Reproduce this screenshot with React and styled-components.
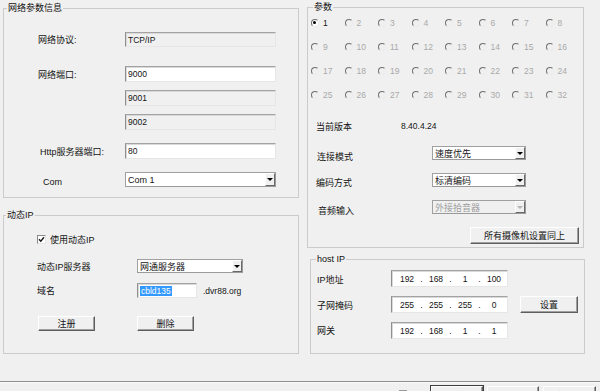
import styled, { createGlobalStyle } from "styled-components";

const GlobalStyle = createGlobalStyle`
  html, body {
    margin: 0;
    padding: 0;
    width: 600px;
    height: 391px;
    overflow: hidden;
    background: #f0f0f0;
  }
  body {
    font-family: "Liberation Sans", "Noto Sans CJK SC", sans-serif;
    font-size: 8.5px;
    color: #141414;
  }
`;

const Dialog = styled.div`
  width: 600px;
  height: 391px;
  overflow: hidden;
`;

const Content = styled.div`
  display: flex;
  height: 381px;
`;

const Column = styled.div`
  display: flex;
  flex-direction: column;
  width: ${(p) => p.$w}px;
  margin-left: ${(p) => p.$ml}px;
  padding-top: ${(p) => p.$pt}px;
`;

const Group = styled.fieldset`
  box-sizing: border-box;
  min-width: 0;
  margin: ${(p) => p.$mt || 0}px 0 0 ${(p) => p.$ml || 0}px;
  padding: 0;
  width: ${(p) => p.$w}px;
  height: ${(p) => p.$h}px;
  border: 1px solid #cbcbcb;
`;

const Legend = styled.legend`
  margin-left: ${(p) => p.$indent}px;
  padding: 0 1px;
  height: 12px;
  line-height: 12px;
  font-size: 9px;
  color: #111;
`;

const Row = styled.div`
  display: flex;
  align-items: center;
  height: ${(p) => p.$h || 16}px;
  margin-top: ${(p) => p.$mt}px;
  padding-left: ${(p) => p.$pl || 0}px;
`;

const Label = styled.span`
  box-sizing: border-box;
  flex: none;
  width: ${(p) => p.$w}px;
  padding-left: ${(p) => p.$pl || 0}px;
  padding-top: ${(p) => p.$dy || 0}px;
  font-size: 9px;
  white-space: nowrap;
`;

const Field = styled.div`
  box-sizing: border-box;
  flex: none;
  display: flex;
  align-items: center;
  width: ${(p) => p.$w || 151}px;
  height: 100%;
  padding-left: ${(p) => p.$pad ?? 2}px;
  border: 1px solid;
  border-color: #a3a3a3 #e6e6e6 #e6e6e6 #8f8f8f;
  box-shadow: inset 1px 1px 0 #d9d9d9;
  background: ${(p) => (p.$ro ? "#f0f0f0" : "#fff")};
`;

const Select = styled.div`
  box-sizing: border-box;
  flex: none;
  display: flex;
  align-items: center;
  justify-content: space-between;
  width: ${(p) => p.$w}px;
  height: 100%;
  padding-left: 2px;
  border: 1px solid;
  border-color: #a0a0a0 #9a9a9a #9a9a9a #a0a0a0;
  background: ${(p) => (p.$disabled ? "#f0f0f0" : "#fff")};
  color: ${(p) => (p.$disabled ? "#9d9d9d" : "#141414")};
  font-size: 9px;
`;

const Arrow = styled.span`
  box-sizing: border-box;
  display: flex;
  align-items: center;
  justify-content: center;
  width: 10px;
  height: 100%;
  background: #f0f0f0;
  border-left: 1px solid #fff;
  border-top: 1px solid #fff;
  border-right: 1px solid #6a6a6a;
  border-bottom: 1px solid #6a6a6a;

  &::after {
    content: "";
    border-left: 3px solid transparent;
    border-right: 3px solid transparent;
    border-top: 3px solid ${(p) => (p.$disabled ? "#b5b5b5" : "#000")};
  }
`;

const Btn = styled.button`
  box-sizing: border-box;
  flex: none;
  display: flex;
  align-items: ${(p) => (p.$top ? "flex-start" : "center")};
  justify-content: center;
  width: ${(p) => p.$w}px;
  height: ${(p) => p.$h || 15}px;
  margin-left: ${(p) => p.$ml || 0}px;
  padding: ${(p) => (p.$top ? "2px 0 0" : "0")};
  font-family: inherit;
  font-size: 9px;
  color: #141414;
  background: #f0f0f0;
  border: 1px solid;
  border-color: #fff #5e5e5e #5e5e5e #fff;
  box-shadow: inset -1px -1px 0 #a0a0a0;
  outline: ${(p) => (p.$default ? "1px solid #3c3c3c" : "none")};
  outline-offset: 0;
`;

const RadioGrid = styled.div`
  display: grid;
  grid-template-columns: repeat(8, 33.5px);
  grid-auto-rows: 18px;
  row-gap: 6px;
  margin-top: 1px;
  padding-left: 3px;
`;

const RadioItem = styled.label`
  display: flex;
  align-items: center;
  gap: 4px;
  font-size: 8.5px;
  color: ${(p) => (p.$on ? "#141414" : "#a9a9a9")};
`;

const RadioDot = styled.span`
  box-sizing: border-box;
  position: relative;
  width: 8px;
  height: 8px;
  border-radius: 50%;
  border: 1.5px solid;
  border-color: #707070 #ececec #ececec #707070;
  background: ${(p) => (p.$on ? "#fff" : "#f0f0f0")};

  &::after {
    content: "";
    display: ${(p) => (p.$on ? "block" : "none")};
    position: absolute;
    left: 1px;
    top: 1px;
    width: 3px;
    height: 3px;
    border-radius: 50%;
    background: #000;
  }
`;

const CheckBox = styled.span`
  box-sizing: border-box;
  display: flex;
  align-items: center;
  justify-content: center;
  width: 9px;
  height: 9px;
  margin-right: 4px;
  border: 1px solid;
  border-color: #8a8a8a #e6e6e6 #e6e6e6 #8a8a8a;
  background: #fff;
`;

const Selected = styled.span`
  background: #3399ff;
  color: #fff;
  padding: 0 1px;
`;

const Suffix = styled.span`
  margin-left: 6px;
`;

const IpSeg = styled.span`
  width: 24px;
  text-align: center;
`;

const IpDot = styled.span`
  width: 5px;
  text-align: center;
`;

const Separator = styled.div`
  height: 0;
  border-top: 1px solid #8e8e8e;
  border-bottom: 1px solid #fbfbfb;
`;

const ButtonBar = styled.div`
  display: flex;
  justify-content: flex-end;
  align-items: flex-start;
  gap: 4px;
  padding: 3px 4px 0 0;
`;

const Mark = styled.span`
  width: 8px;
  height: 1px;
  margin: 4px 20px 0 0;
  background: #9a9a9a;
`;

const Check = () => (
  <svg width="7" height="7" viewBox="0 0 7 7">
    <path d="M1 3.2 L2.8 5.2 L6 1.2" fill="none" stroke="#1a1a1a" strokeWidth="1.4" />
  </svg>
);

const IpField = ({ parts }) => (
  <Field $w={117} $pad={3}>
    {parts.map((n, i) => (
      <span key={i} style={{ display: "contents" }}>
        {i > 0 && <IpDot>.</IpDot>}
        <IpSeg>{n}</IpSeg>
      </span>
    ))}
  </Field>
);

const channels = Array.from({ length: 32 }, (_, i) => i + 1);

export default function App() {
  return (
    <Dialog>
      <GlobalStyle />
      <Content>
        <Column $w={296} $ml={3} $pt={2}>
          <Group $w={296} $h={196}>
            <Legend $indent={3}>网络参数信息</Legend>
            <Row $mt={18} $h={15}>
              <Label $w={121} $pl={34}>网络协议:</Label>
              <Field $ro>TCP/IP</Field>
            </Row>
            <Row $mt={19}>
              <Label $w={121} $pl={34}>网络端口:</Label>
              <Field>9000</Field>
            </Row>
            <Row $mt={8}>
              <Label $w={121} />
              <Field $ro>9001</Field>
            </Row>
            <Row $mt={8}>
              <Label $w={121} />
              <Field $ro>9002</Field>
            </Row>
            <Row $mt={13}>
              <Label $w={121} $pl={36}>Http服务器端口:</Label>
              <Field>80</Field>
            </Row>
            <Row $mt={13} $h={15}>
              <Label $w={121} $pl={39} $dy={5}>Com</Label>
              <Select $w={151}>
                Com 1
                <Arrow />
              </Select>
            </Row>
          </Group>

          <Group $w={296} $h={145} $mt={11}>
            <Legend $indent={2}>动态IP</Legend>
            <Row $mt={13} $h={10} $pl={33}>
              <CheckBox>
                <Check />
              </CheckBox>
              <Label>使用动态IP</Label>
            </Row>
            <Row $mt={15} $h={14}>
              <Label $w={133} $pl={33}>动态IP服务器</Label>
              <Select $w={106}>
                网通服务器
                <Arrow />
              </Select>
            </Row>
            <Row $mt={10} $h={15}>
              <Label $w={133} $pl={33}>域名</Label>
              <Field $w={60}>
                <Selected>cbld135</Selected>
              </Field>
              <Suffix>.dvr88.org</Suffix>
            </Row>
            <Row $mt={18} $h={15} $pl={34}>
              <Btn $w={57}>注册</Btn>
              <Btn $w={57} $ml={42}>删除</Btn>
            </Row>
          </Group>
        </Column>

        <Column $w={278} $ml={8} $pt={1}>
          <Group $w={277} $h={247}>
            <Legend $indent={5}>参数</Legend>
            <RadioGrid>
              {channels.map((n) => (
                <RadioItem key={n} $on={n === 1}>
                  <RadioDot $on={n === 1} />
                  {n}
                </RadioItem>
              ))}
            </RadioGrid>
            <Row $mt={15} $h={14}>
              <Label $w={93} $pl={8}>当前版本</Label>
              <span>8.40.4.24</span>
            </Row>
            <Row $mt={13} $h={14}>
              <Label $w={124} $pl={9} $dy={6}>连接模式</Label>
              <Select $w={94}>
                速度优先
                <Arrow />
              </Select>
            </Row>
            <Row $mt={13} $h={14}>
              <Label $w={124} $pl={8} $dy={5}>编码方式</Label>
              <Select $w={94}>
                标清编码
                <Arrow />
              </Select>
            </Row>
            <Row $mt={13} $h={14}>
              <Label $w={124} $pl={10} $dy={6}>音频输入</Label>
              <Select $w={94} $disabled>
                外接拾音器
                <Arrow $disabled />
              </Select>
            </Row>
            <Row $mt={13} $h={17}>
              <Btn $w={109} $h={17} $ml={162}>所有摄像机设置同上</Btn>
            </Row>
          </Group>

          <Group $w={275} $h={101} $mt={5} $ml={3}>
            <Legend $indent={5}>host IP</Legend>
            <Row $mt={5} $h={17}>
              <Label $w={80} $pl={6} $dy={2}>IP地址</Label>
              <IpField parts={["192", "168", "1", "100"]} />
            </Row>
            <Row $mt={9} $h={17}>
              <Label $w={80} $pl={6} $dy={2}>子网掩码</Label>
              <IpField parts={["255", "255", "255", "0"]} />
              <Btn $w={58} $h={17} $ml={12}>设置</Btn>
            </Row>
            <Row $mt={9} $h={17}>
              <Label $w={80} $pl={6}>网关</Label>
              <IpField parts={["192", "168", "1", "1"]} />
            </Row>
          </Group>
        </Column>
      </Content>

      <Separator />
      <ButtonBar>
        <Mark />
        <Btn $w={52} $h={20} $default $top>确定</Btn>
        <Btn $w={52} $h={20} $top>取消</Btn>
        <Btn $w={53} $h={20} $top>应用(A)</Btn>
      </ButtonBar>
    </Dialog>
  );
}
